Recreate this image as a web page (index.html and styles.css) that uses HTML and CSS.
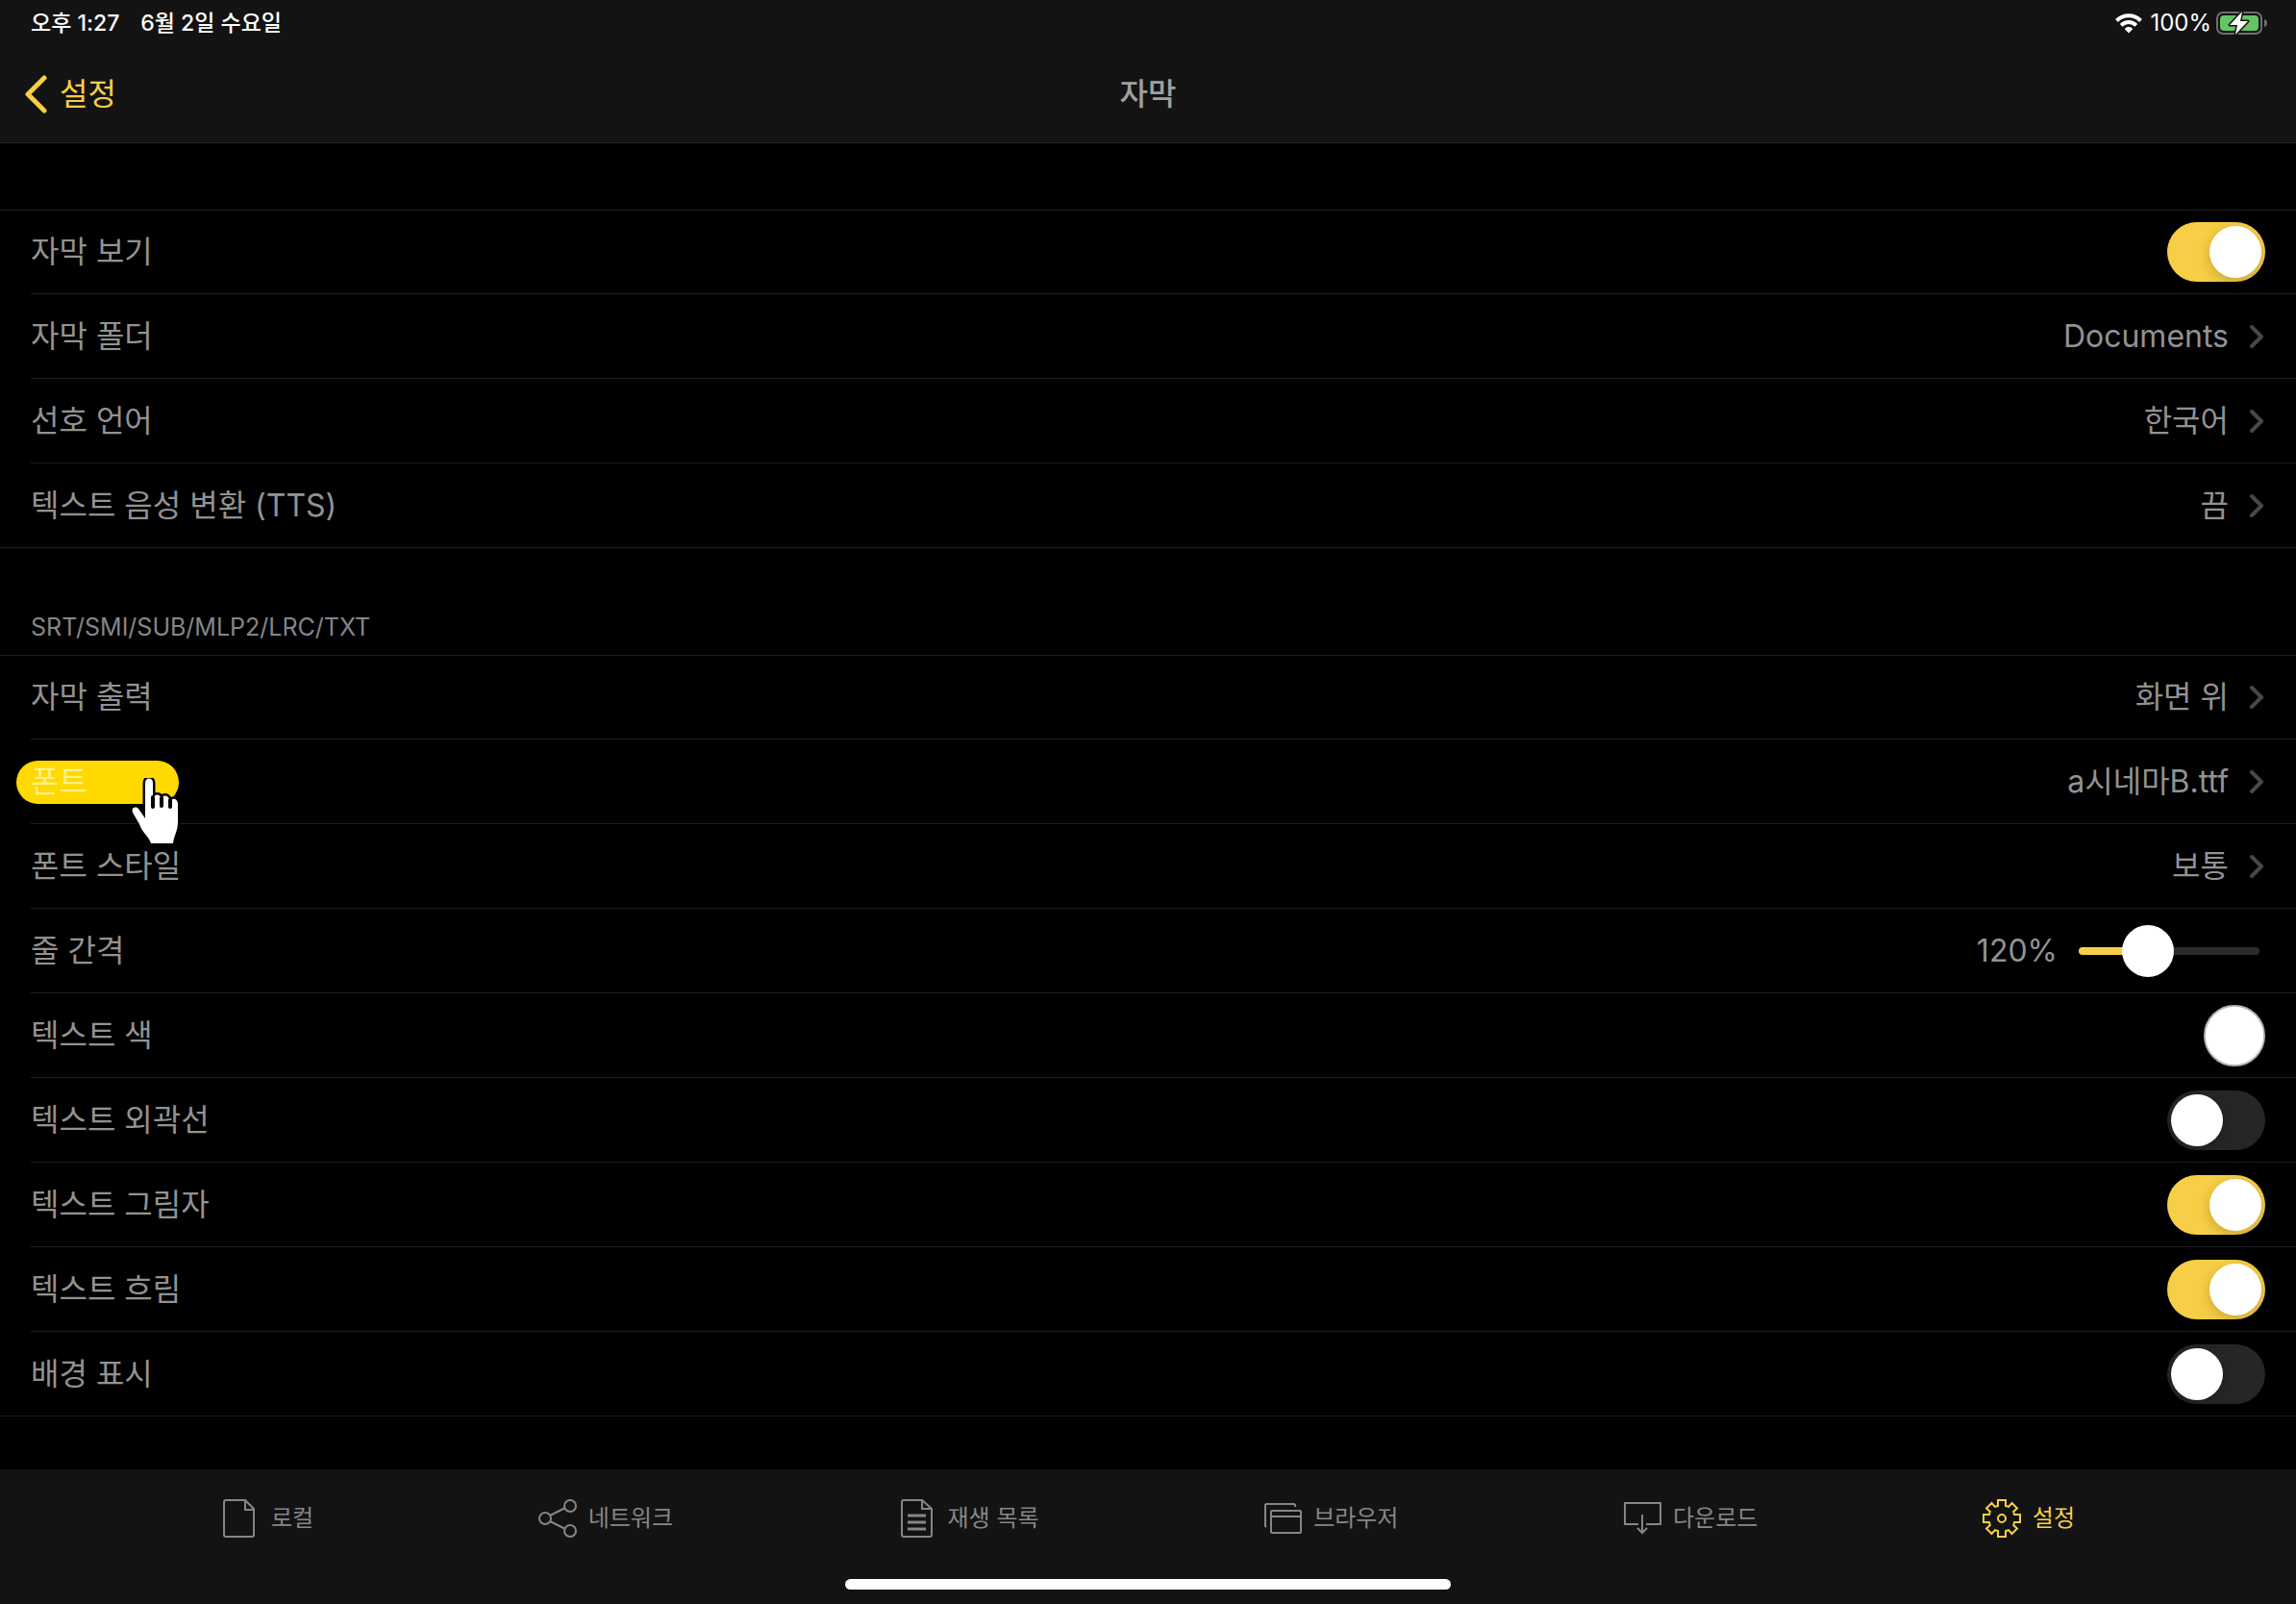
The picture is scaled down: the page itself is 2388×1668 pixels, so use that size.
FILE: index.html
```html
<!DOCTYPE html>
<html lang="ko">
<head>
    <meta charset="UTF-8">
    <meta name="viewport" content="width=device-width, initial-scale=1.0">
    <title>자막</title>
    <link rel="stylesheet" href="styles.css">
</head>
<body>
    <!-- Shared icons -->
    <svg class="sprite" width="0" height="0">
        <symbol id="chevron" viewBox="0 0 16 26">
            <path d="M2 3l10 10L2 23" fill="none" stroke="currentColor" stroke-width="4" stroke-linecap="round" stroke-linejoin="round"/>
        </symbol>
    </svg>

    <header class="header">
        <div class="status-bar">
            <span>오후 1:27</span>
            <span class="date">6월 2일 수요일</span>
            <div class="status-icons">
                <svg class="wifi" viewBox="0 0 28 22">
                    <g fill="none" stroke="#fff" stroke-width="4">
                        <path d="M1.5 8.5a17.6 17.6 0 0 1 25 0"/>
                        <path d="M6.2 13.3a11 11 0 0 1 15.6 0"/>
                    </g>
                    <path d="M14 21l-3.8-4a5.4 5.4 0 0 1 7.6 0z" fill="#fff" stroke="#fff" stroke-linejoin="round"/>
                </svg>
                <span>100%</span>
                <svg class="battery" viewBox="0 0 54 26">
                    <rect x="2" y="2" width="46" height="22" rx="6" fill="none" stroke="#6e6e6e" stroke-width="2"/>
                    <rect x="5" y="5" width="40" height="16" rx="4" fill="#65c466"/>
                    <path d="M51 9c4 1 4 7 0 8z" fill="#6e6e6e"/>
                    <path d="M28 1L15 15h8l-2 10 13-14h-8z" fill="#fff" stroke="#131313" stroke-width="3" paint-order="stroke" stroke-linejoin="round"/>
                </svg>
            </div>
        </div>
        <nav class="nav-bar">
            <a class="back" href="#">
                <svg viewBox="0 0 24 40"><path d="M20 3L3 20l17 17" fill="none" stroke="currentColor" stroke-width="5" stroke-linecap="round" stroke-linejoin="round"/></svg>
                설정
            </a>
            <h1>자막</h1>
        </nav>
    </header>

    <main class="settings">
        <section class="group">
            <div class="row">
                <label for="showSubtitle">자막 보기</label>
                <input type="checkbox" class="switch" id="showSubtitle" checked>
            </div>
            <a class="row" href="#">
                <span>자막 폴더</span>
                <span class="value">Documents</span>
                <svg class="chevron"><use href="#chevron"/></svg>
            </a>
            <a class="row" href="#">
                <span>선호 언어</span>
                <span class="value">한국어</span>
                <svg class="chevron"><use href="#chevron"/></svg>
            </a>
            <a class="row" href="#">
                <span>텍스트 음성 변환 (TTS)</span>
                <span class="value">끔</span>
                <svg class="chevron"><use href="#chevron"/></svg>
            </a>
        </section>

        <h2>SRT/SMI/SUB/MLP2/LRC/TXT</h2>
        <section class="group">
            <a class="row" href="#">
                <span>자막 출력</span>
                <span class="value">화면 위</span>
                <svg class="chevron"><use href="#chevron"/></svg>
            </a>
            <a class="row highlighted" href="#">
                <span>폰트</span>
                <span class="value">a시네마B.ttf</span>
                <svg class="chevron"><use href="#chevron"/></svg>
                <svg class="pointer" viewBox="0 0 56 70">
                    <path d="M22 68C20 61 13 57 10 48L3 36C1 31 6 29 9 32L16 42V5C16 -1 24 -1 24 5V22C25 16 32 16 33 22C34 17 40 17 42 24C45 20 50 22 50 27V45C50 56 46 59 45 68z" fill="#fff" stroke="#000" stroke-width="5" paint-order="stroke"/>
                    <path d="M24 20v10M33 21v8M42 23v7" fill="none" stroke="#000" stroke-width="4" stroke-linecap="round"/>
                </svg>
            </a>
            <a class="row" href="#">
                <span>폰트 스타일</span>
                <span class="value">보통</span>
                <svg class="chevron"><use href="#chevron"/></svg>
            </a>
            <div class="row">
                <label for="lineSpacing">줄 간격</label>
                <span class="value">120%</span>
                <input type="range" class="slider" id="lineSpacing" min="50" max="260" value="120">
            </div>
            <div class="row">
                <label for="textColor">텍스트 색</label>
                <input type="color" class="swatch" id="textColor" value="#ffffff">
            </div>
            <div class="row">
                <label for="textOutline">텍스트 외곽선</label>
                <input type="checkbox" class="switch" id="textOutline">
            </div>
            <div class="row">
                <label for="textShadow">텍스트 그림자</label>
                <input type="checkbox" class="switch" id="textShadow" checked>
            </div>
            <div class="row">
                <label for="textFlow">텍스트 흐림</label>
                <input type="checkbox" class="switch" id="textFlow" checked>
            </div>
            <div class="row">
                <label for="showBackground">배경 표시</label>
                <input type="checkbox" class="switch" id="showBackground">
            </div>
        </section>
    </main>

    <footer class="footer">
        <nav class="tabs">
            <a class="tab" href="#">
                <svg viewBox="0 0 40 40">
                    <path d="M5 1h20l9 9v27a2 2 0 0 1-2 2H5a2 2 0 0 1-2-2V3a2 2 0 0 1 2-2z"/>
                    <path d="M25 1v10h9"/>
                </svg>
                로컬
            </a>
            <a class="tab" href="#">
                <svg viewBox="0 0 40 40">
                    <circle cx="7" cy="20" r="6"/>
                    <circle cx="33" cy="7" r="6"/>
                    <circle cx="33" cy="33" r="6"/>
                    <path d="M12 17l16-8M12 23l16 8"/>
                </svg>
                네트워크
            </a>
            <a class="tab" href="#">
                <svg viewBox="0 0 40 40">
                    <path d="M6 1h19l10 9v27a2 2 0 0 1-2 2H6a2 2 0 0 1-2-2V3a2 2 0 0 1 2-2z"/>
                    <path d="M25 1v9h10"/>
                    <path d="M10 17h19M10 24h19M10 31h19" stroke-width="3"/>
                </svg>
                재생 목록
            </a>
            <a class="tab" href="#">
                <svg viewBox="0 0 40 40">
                    <rect x="8" y="12" width="31" height="23" rx="1"/>
                    <path d="M8 18h31M3 29l-1-1V6l1-1h29l1 1v2"/>
                </svg>
                브라우저
            </a>
            <a class="tab" href="#">
                <svg viewBox="0 0 40 40">
                    <path d="M16 26H2V4h37v22H24M20 16v19M15 30l5 5 5-5"/>
                </svg>
                다운로드
            </a>
            <a class="tab active" href="#">
                <svg viewBox="0 0 40 40">
                    <path d="M16 1h8v6l3.1.8L30.5 4 36 9.5l-3.8 3.4L33 16h6v8h-6l-.8 3.1L36 30.5 30.5 36l-3.4-3.8L24 33v6h-8v-6l-3.1-.8L9.5 36 4 30.5l3.8-3.4L7 24H1v-8h6l.8-3.1L4 9.5 9.5 4l3.4 3.8L16 7z"/>
                    <circle cx="20" cy="20" r="4"/>
                </svg>
                설정
            </a>
        </nav>
        <div class="home-indicator"></div>
    </footer>
</body>
</html>
```

FILE: styles.css
```css
* {
    box-sizing: border-box;
}
body {
    margin: 0;
    min-height: 100vh;
    display: flex;
    flex-direction: column;
    background-color: #000;
    color: #929292;
    font-family: Inter, "Noto Sans CJK KR", sans-serif;
    font-size: 32px;
    font-weight: 400;
    line-height: 40px;
}
a {
    color: inherit;
    text-decoration: none;
}
.sprite {
    position: absolute;
}

/* Header */
.header {
    background-color: #131313;
    border-bottom: 1px solid #262626;
}
.status-bar {
    display: flex;
    align-items: center;
    height: 48px;
    padding: 0 30px 0 32px;
    color: #fff;
    font-size: 23px;
    font-weight: 500;
}
.date {
    margin-left: 22px;
}
.status-icons {
    display: flex;
    align-items: center;
    margin-left: auto;
    font-size: 24px;
    font-weight: 400;
}
.wifi {
    width: 28px;
    height: 22px;
    margin-right: 8px;
}
.battery {
    width: 54px;
    height: 26px;
    margin-left: 4px;
}
.nav-bar {
    display: grid;
    grid-template-columns: 1fr auto 1fr;
    align-items: center;
    height: 100px;
    padding: 0 26px;
}
.nav-bar h1 {
    margin: 0;
    color: #a0a0a0;
    font-size: 32px;
    font-weight: 500;
}
.back {
    display: flex;
    align-items: center;
    gap: 12px;
    color: #f7ce46;
}
.back svg {
    width: 24px;
    height: 40px;
}

/* Settings list */
.settings {
    flex: 1;
    padding-top: 69px;
}
.settings h2 {
    margin: 0;
    padding: 66px 32px 13px;
    color: #85858a;
    font-size: 25px;
    font-weight: 400;
    line-height: 32px;
}
.group {
    border-top: 1px solid #1e1e1f;
    border-bottom: 1px solid #1e1e1f;
}
.row {
    position: relative;
    display: flex;
    align-items: center;
    height: 88px;
    margin-left: 32px;
    padding-right: 32px;
    border-bottom: 1px solid #1e1e1f;
}
.row:first-child {
    height: 87px;
}
.row:last-child {
    height: 87px;
    border-bottom: none;
}
.value {
    margin-left: auto;
}
.chevron {
    width: 16px;
    height: 26px;
    margin-left: 22px;
    color: #48484a;
}

/* Controls */
.switch {
    appearance: none;
    width: 102px;
    height: 62px;
    margin: 0 0 0 auto;
    padding: 4px;
    border-radius: 31px;
    background-color: #262628;
}
.switch::before {
    content: "";
    display: block;
    width: 54px;
    height: 54px;
    border-radius: 50%;
    background-color: #fff;
    box-shadow: 0 4px 14px rgba(0, 0, 0, 0.2);
}
.switch:checked {
    background-color: #f7ce46;
}
.switch:checked::before {
    margin-left: auto;
}
.slider {
    appearance: none;
    width: 188px;
    height: 8px;
    margin: 0 6px 0 22px;
    border-radius: 4px;
    background: linear-gradient(to right, #f7ce46 36%, #2c2c2e 36%);
}
.slider::-webkit-slider-thumb {
    appearance: none;
    width: 54px;
    height: 54px;
    border-radius: 50%;
    background-color: #fff;
}
.swatch {
    appearance: none;
    width: 64px;
    height: 64px;
    margin-left: auto;
    padding: 0;
    border: 2px solid #b4b4b4;
    border-radius: 50%;
    background-color: #fff;
    overflow: hidden;
}
.swatch::-webkit-color-swatch-wrapper {
    padding: 0;
}
.swatch::-webkit-color-swatch {
    border: none;
    border-radius: 50%;
}

/* Highlighted row with the hand pointer */
.highlighted span:first-child {
    z-index: 1;
    color: #fff08c;
}
.highlighted::before {
    content: "";
    position: absolute;
    left: -15px;
    top: 22px;
    width: 169px;
    height: 45px;
    border-radius: 23px;
    background-color: #ffd900;
}
.pointer {
    position: absolute;
    left: 103px;
    top: 40px;
    width: 56px;
    height: 70px;
    z-index: 2;
}

/* Tab bar */
.footer {
    display: flex;
    flex-direction: column;
    align-items: center;
    height: 140px;
    background-color: #131313;
}
.tabs {
    display: flex;
    justify-content: space-between;
    align-self: stretch;
    padding: 31px 230px 0;
}
.tab {
    display: flex;
    align-items: center;
    gap: 12px;
    font-size: 24px;
    color: #868686;
}
.tab svg {
    width: 40px;
    height: 40px;
    fill: none;
    stroke: currentColor;
    stroke-width: 2;
}
.tab.active {
    color: #f7ce46;
}
.home-indicator {
    width: 630px;
    height: 11px;
    margin-top: 43px;
    border-radius: 6px;
    background-color: #fff;
}
```
